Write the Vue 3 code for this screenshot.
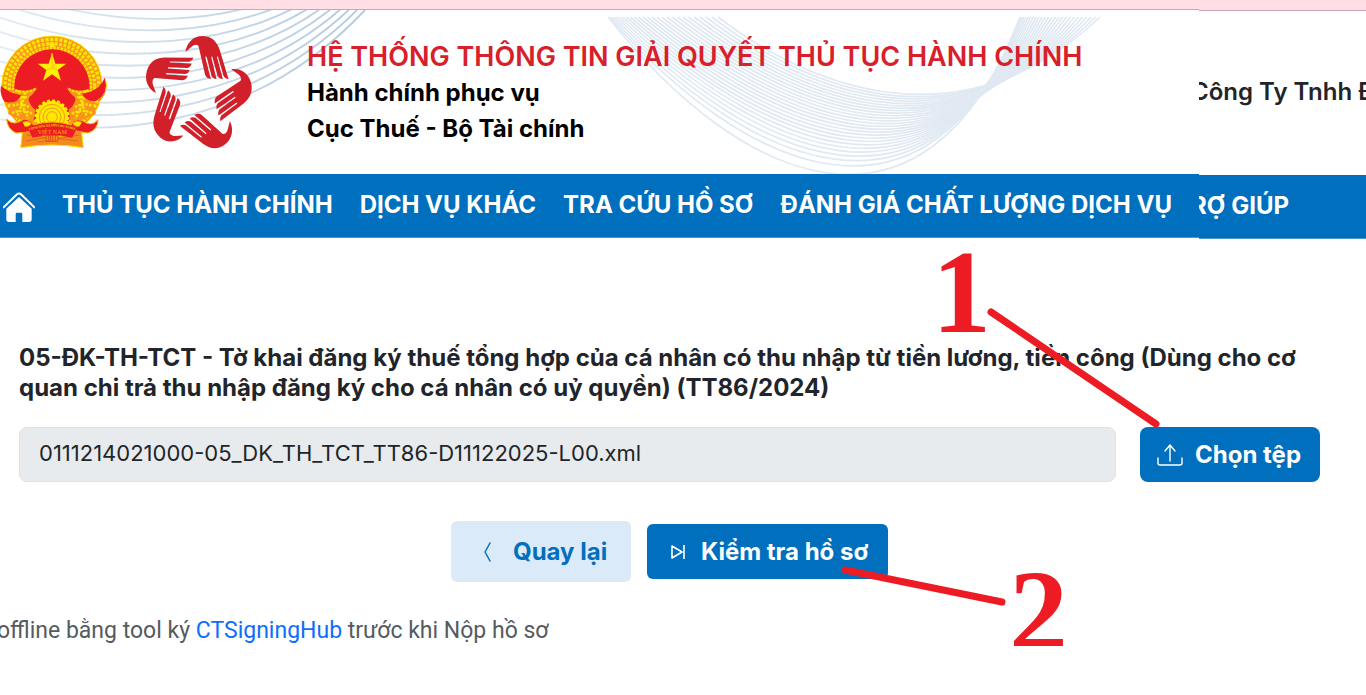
<template>
    <div class="page">
        <header class="top">
            <div class="top-main">
                <div class="strip"></div>
                <div class="banner">
                    <svg class="waves" viewBox="0 0 1199 164" preserveAspectRatio="xMinYMin slice" aria-hidden="true">
                        <defs>
                            <linearGradient id="fade" gradientUnits="userSpaceOnUse" x1="0" y1="0" x2="363" y2="0">
                                <stop offset="0" stop-color="#E3ECF4" />
                                <stop offset="1" stop-color="#B3CADF" />
                            </linearGradient>
                        </defs>
                        <path v-for="(d, index) in leftWaves" :key="'l' + index" :d="d" stroke="url(#fade)" stroke-width="1.9" />
                        <path v-for="(d, index) in middleWaves" :key="'m' + index" :d="d" class="wave-middle" />
                    </svg>
                    <svg class="emblem" viewBox="0 0 320 342" role="img" aria-label="Quốc huy Việt Nam">
                        <path d="M66 282 L60 338 Q154 322 248 338 L242 282 Z" fill="#f58a1f" stroke="#fde800" stroke-width="3" />
                        <path d="M78 300 L232 318 M76 318 L200 296 M110 322 L236 300" stroke="#d95a12" stroke-width="2" />
                        <circle cx="154" cy="154" r="151" fill="#f7941d" stroke="#fde800" stroke-width="3" />
                        <circle cx="154" cy="154" r="141" fill="none" stroke="#fde800" stroke-width="10" stroke-dasharray="9 5" />
                        <circle cx="154" cy="154" r="128" fill="none" stroke="#ffe600" stroke-width="10" stroke-dasharray="8 5" />
                        <circle cx="154" cy="154" r="116" fill="none" stroke="#fde800" stroke-width="8" stroke-dasharray="7 4" />
                        <circle cx="154" cy="156" r="113" fill="#ed1c24" />
                        <circle cx="154" cy="29" r="8" fill="#fde800" />
                        <path d="M154 54 L164 86 L197 86 L171 105 L181 137 L154 118 L127 137 L137 105 L111 86 L144 86 Z" fill="#fff200" />
                        <path d="M154 54 L154 98 L137 105 M154 98 L171 105 M154 98 L164 86" fill="none" stroke="#f9c400" stroke-width="3" />
                        <path d="M44 162 Q76 174 108 158 Q98 180 82 188 Q88 214 104 224 L98 262 Q50 254 22 236 Q36 196 44 162 Z" fill="#f7941d" />
                        <path d="M264 162 Q232 174 200 158 Q210 180 226 188 Q220 214 204 224 L210 262 Q258 254 286 236 Q272 196 264 162 Z" fill="#f7941d" />
                        <path d="M44 166 Q76 178 108 160 M38 190 Q66 184 84 188 M36 212 Q62 202 88 218 M34 234 Q66 220 98 238 M54 166 Q60 208 84 250 M74 172 Q62 214 50 244" fill="none" stroke="#fde800" stroke-width="7" stroke-dasharray="7 4" />
                        <path d="M264 166 Q232 178 200 160 M270 190 Q242 184 224 188 M272 212 Q246 202 220 218 M274 234 Q242 220 210 238 M254 166 Q248 208 224 250 M234 172 Q246 214 258 244" fill="none" stroke="#fde800" stroke-width="7" stroke-dasharray="7 4" />
                        <path d="M1 152 Q24 174 62 180 Q48 210 12 200 Q-4 180 1 152 Z" fill="#ed1c24" />
                        <path d="M312 128 Q294 170 244 176 Q258 206 298 196 Q328 166 312 128 Z" fill="#ed1c24" />
                        <path d="M314 130 Q328 176 286 200" fill="none" stroke="#fde800" stroke-width="3" />
                        <circle cx="154" cy="246" r="48" fill="#fde800" stroke="#fde800" stroke-width="9" stroke-dasharray="9 6" />
                        <circle cx="154" cy="246" r="38" fill="none" stroke="#f39a1c" stroke-width="3" />
                        <circle cx="154" cy="246" r="27" fill="none" stroke="#f39a1c" stroke-width="3" />
                        <circle cx="154" cy="246" r="16" fill="none" stroke="#f39a1c" stroke-width="3" />
                        <path d="M18 252 Q38 276 70 252 Q94 254 98 270 Q154 252 212 270 Q216 250 244 256 Q272 278 292 254 Q292 284 262 294 L236 290 Q154 262 74 292 L46 294 Q20 282 18 252 Z" fill="#ed1c24" stroke="#f7b500" stroke-width="3" />
                        <path d="M66 262 Q82 254 92 264 Q88 276 72 274 M244 262 Q228 254 216 264 Q220 276 236 274" fill="#fde800" stroke="#f7941d" stroke-width="3" />
                        <path d="M84 286 Q154 252 226 286 L214 308 Q154 294 96 308 Z" fill="#ed1c24" />
                        <path id="ribbon" d="M86 286 Q154 262 226 286" fill="none" />
                        <text class="ribbon-text"><textPath href="#ribbon">CỘNG HÒA XÃ HỘI CHỦ NGHĨA</textPath></text>
                        <text class="country" x="155" y="297" text-anchor="middle">VIỆT NAM</text>
                        <path d="M136 301 H172 V319 H136 Z" fill="#f58a1f" stroke="#d4380f" stroke-width="2" />
                        <path d="M144 301 V319 M150 301 V319 M156 301 V319 M164 301 V319" stroke="#d4380f" stroke-width="2" />
                    </svg>
                    <svg class="hands" viewBox="436 104 320 344" role="img" aria-label="Hành chính phục vụ">
                        <g transform="translate(592 281) scale(0.939 1)">
                            <g v-for="angle in handAngles" :key="angle" :transform="`rotate(${angle}) scale(1.065 1) translate(-590 -281)`">
                                <path class="hand" d="M555 155 C558 130 576 107 607 107 C636 108 650 126 658 150 L684 236 Q674 236 669 227 L652 168 L649 169 L667 236 Q656 236 651 227 L635 168 L632 169 L648 236 Q638 236 633 227 L618 168 L614 169 L631 236 Q618 234 614 224 L594 137 Q588 130 576 137 Z" />
                            </g>
                        </g>
                    </svg>
                    <div class="titles">
                        <h1>HỆ THỐNG THÔNG TIN GIẢI QUYẾT THỦ TỤC HÀNH CHÍNH</h1>
                        <p>Hành chính phục vụ</p>
                        <p>Cục Thuế - Bộ Tài chính</p>
                    </div>
                </div>
                <nav class="nav">
                    <a href="#" class="home" aria-label="Trang chủ">
                        <svg viewBox="0 0 96 90" aria-hidden="true">
                            <path d="M2 46 L42 7 Q48 2 54 7 L94 46" fill="none" stroke="#fff" stroke-width="6" stroke-linecap="round" />
                            <path d="M10 50 L48 15 L86 50 V82 Q86 90 78 90 H58 V66 Q58 62 54 62 H42 Q38 62 38 66 V90 H18 Q10 90 10 82 Z" fill="#fff" />
                        </svg>
                    </a>
                    <a v-for="item in menu" :key="item" href="#">{{ item }}</a>
                </nav>
            </div>
            <div class="top-side">
                <div class="strip"></div>
                <div class="banner account">
                    <span>Công Ty Tnhh Đầu Tư</span>
                </div>
                <nav class="nav">
                    <a href="#" class="help">TRỢ GIÚP</a>
                </nav>
            </div>
        </header>

        <main class="content">
            <h2 id="form-name">05-ĐK-TH-TCT - Tờ khai đăng ký thuế tổng hợp của cá nhân có thu nhập từ tiền lương, tiền công (Dùng cho cơ quan chi trả thu nhập đăng ký cho cá nhân có uỷ quyền) (TT86/2024)</h2>
            <div class="file-row">
                <input v-model="fileName" type="text" class="file-name" aria-labelledby="form-name" readonly>
                <div class="marked">
                    <button type="button" class="btn btn-primary btn-file">
                        <svg class="icon-upload" viewBox="0 0 26 22" aria-hidden="true">
                            <path d="M1 14 V19 Q1 21 3 21 H23 Q25 21 25 19 V14 M13 17 V1 M8 7 L13 1 L18 7" />
                        </svg>
                        Chọn tệp
                    </button>
                    <div class="mark mark-one">
                        <svg viewBox="0 0 220 176" aria-hidden="true">
                            <line x1="51" y1="60" x2="216" y2="172" />
                        </svg>
                        <span>1</span>
                    </div>
                </div>
            </div>
            <div class="actions">
                <button type="button" class="btn btn-light">
                    <svg class="icon-back" viewBox="0 0 8 20" aria-hidden="true">
                        <path d="M7 1 L2 10 L7 19" />
                    </svg>
                    Quay lại
                </button>
                <div class="marked">
                    <button type="button" class="btn btn-primary btn-check">
                        <svg class="icon-next" viewBox="0 0 14 14" aria-hidden="true">
                            <path d="M1 1 L11 7 L1 13 Z M13 0 V14" />
                        </svg>
                        Kiểm tra hồ sơ
                    </button>
                    <div class="mark mark-two">
                        <svg viewBox="0 0 226 90" aria-hidden="true">
                            <line x1="5" y1="5" x2="162" y2="37" />
                        </svg>
                        <span>2</span>
                    </div>
                </div>
            </div>
            <p class="note">offline bằng tool ký <a href="#">CTSigningHub</a> trước khi Nộp hồ sơ</p>
        </main>
    </div>
</template>

<script setup>
    import {ref} from "vue"

    const fileName = ref("0111214021000-05_DK_TH_TCT_TT86-D11122025-L00.xml")

    const menu = ["THỦ TỤC HÀNH CHÍNH", "DỊCH VỤ KHÁC", "TRA CỨU HỒ SƠ", "ĐÁNH GIÁ CHẤT LƯỢNG DỊCH VỤ"]

    const handAngles = [0, 72, 144, 216, 288]

    const leftWaves = Array.from({length: 13}, (_, i) => {
        return `M-20 ${105 - 15 * i} C100 ${133 - 12 * i} 250 ${122 - 11 * i} ${365 - 3 * i} ${-5 * i}`
    })

    const mix = (a, b, t) => (a + (b - a) * t).toFixed(1)

    // blends the deep curve into the shallow one, ends bunch up on the left of each fan
    const middleWaves = Array.from({length: 26}, (_, i) => {
        const t = i / 25
        const ends = Math.pow(t, 1.4)
        const body = Math.pow(t, 0.7)
        return `M${mix(608, 718, ends)} 7`
            + ` C${mix(740, 800, body)} ${mix(175, 70, body)}`
            + ` ${mix(925, 955, body)} ${mix(255, 144, body)}`
            + ` ${mix(1020, 1100, ends)} 7`
    })
</script>

<style>
    body {
        background: #FFFFFF;
        overflow: hidden;
    }
</style>

<style scoped>
    .page {
        font-family: Inter, "Noto Sans", sans-serif;
        color: #212529;
    }
    .top {
        display: flex;
    }
    .top-main {
        flex: 1;
        min-width: 0;
    }
    .top-side {
        width: 167px;
        overflow: hidden;
    }
    .strip {
        height: 9px;
        background: #FFDFE5;
        border-bottom: solid 1px #C9A9AF;
    }
    .top-side .strip {
        height: 10px;
    }
    .banner {
        position: relative;
        display: flex;
        align-items: flex-start;
        height: 164px;
        overflow: hidden;
        background: #FFFFFF;
    }
    .waves {
        position: absolute;
        top: 0;
        left: 0;
        width: 1199px;
        height: 164px;
        fill: none;
    }
    .wave-middle {
        stroke: #E0E9F2;
        stroke-width: 1.7;
    }
    .emblem {
        position: relative;
        width: 108px;
        height: 114px;
        margin-top: 25px;
    }
    .ribbon-text {
        font-family: "Liberation Serif", serif;
        font-size: 9px;
        font-weight: 700;
        fill: #FDE800;
    }
    .country {
        font-family: "Liberation Serif", serif;
        font-size: 18px;
        fill: #F7B500;
    }
    .hands {
        position: relative;
        width: 107px;
        height: 115px;
        margin: 25px 0 0 37px;
        overflow: visible;
    }
    .hand {
        fill: #D2202A;
    }
    .titles {
        position: relative;
        margin: 29px 0 0 55px;
        white-space: nowrap;
    }
    .titles h1, .titles p {
        margin: 0;
        line-height: 36px;
        font-weight: 700;
    }
    .titles h1 {
        font-size: 27px;
        font-weight: 600;
        color: #D8202A;
    }
    .titles p {
        font-size: 24px;
        color: #000000;
    }
    .account {
        white-space: nowrap;
        font-size: 24px;
        font-weight: 600;
        line-height: 36px;
    }
    .account span {
        margin: 63px 0 0 -8px;
    }
    .nav {
        display: flex;
        align-items: center;
        gap: 27px;
        height: 61px;
        padding-bottom: 2px;
        background: #0070BE;
        border-bottom: solid 1px #4A97CE;
        white-space: nowrap;
        overflow: hidden;
    }
    .nav a {
        color: #FFFFFF;
        text-decoration: none;
        font-size: 24px;
        font-weight: 650;
        line-height: 36px;
    }
    .nav .home {
        display: flex;
        margin: 4px 0 0 3px;
    }
    .home svg {
        width: 32px;
        height: 30px;
    }
    .nav .help {
        margin-left: -24px;
    }
    .content {
        padding: 104px 46px 0 19px;
    }
    h2 {
        margin: 0;
        font-size: 24px;
        font-weight: 700;
        line-height: 30px;
    }
    .file-row {
        display: flex;
        gap: 24px;
        margin-top: 24px;
    }
    .file-name {
        flex: 1;
        min-width: 0;
        height: 55px;
        box-sizing: border-box;
        padding: 0 19px 4px;
        border: solid 1px #DEE2E6;
        border-radius: 8px;
        background: #E7EBEE;
        color: #212529;
        font-family: inherit;
        font-size: 22px;
    }
    .marked {
        position: relative;
    }
    .btn {
        display: flex;
        align-items: center;
        border: 0;
        font-family: inherit;
        font-size: 24px;
        font-weight: 650;
        white-space: nowrap;
        cursor: pointer;
    }
    .btn svg {
        fill: none;
        stroke: currentColor;
        stroke-linecap: round;
        stroke-linejoin: round;
    }
    .btn-primary {
        height: 55px;
        border-radius: 8px;
        background: #0070BE;
        color: #FFFFFF;
    }
    .btn-file {
        gap: 12px;
        width: 180px;
        padding: 0 0 0 17px;
    }
    .btn-light {
        gap: 22px;
        width: 180px;
        height: 61px;
        padding: 0 0 0 32px;
        border-radius: 6px;
        background: #DBEAF9;
        color: #0070BE;
    }
    .btn-check {
        gap: 16px;
        width: 241px;
        padding: 0 0 0 24px;
        border-radius: 6px;
    }
    .icon-upload {
        width: 26px;
        height: 22px;
        stroke-width: 1.4;
    }
    .icon-back {
        width: 8px;
        height: 20px;
        stroke-width: 1.5;
    }
    .icon-next {
        width: 14px;
        height: 14px;
        stroke-width: 1.6;
    }
    .actions {
        display: flex;
        align-items: center;
        justify-content: center;
        gap: 16px;
        margin-top: 39px;
    }
    .mark {
        position: absolute;
        pointer-events: none;
    }
    .mark svg {
        display: block;
        width: 100%;
        height: 100%;
        stroke: #ED1C24;
        stroke-width: 7;
        stroke-linecap: round;
    }
    .mark span {
        position: absolute;
        color: #ED1C24;
        font-family: "Liberation Serif", serif;
        font-size: 118px;
        font-weight: 700;
        line-height: 118px;
    }
    .mark-one {
        left: -200px;
        bottom: 54px;
        width: 220px;
        height: 176px;
    }
    .mark-one span {
        left: -8px;
        top: -18px;
    }
    .mark-two {
        left: 193px;
        top: 41px;
        width: 226px;
        height: 90px;
    }
    .mark-two span {
        right: -2px;
        top: -11px;
    }
    .note {
        margin: 34px 0 0 -22px;
        font-family: Roboto, "Noto Sans", sans-serif;
        font-size: 23px;
        line-height: 30px;
        color: #555B61;
    }
    .note a {
        color: #0D6EFD;
        text-decoration: none;
    }
</style>
